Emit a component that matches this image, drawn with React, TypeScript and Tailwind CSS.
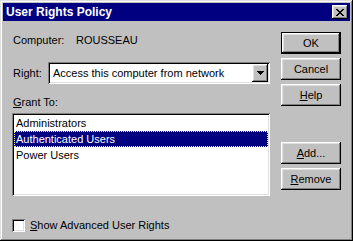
import React from "react";

const raised =
  "shadow-[inset_-1px_-1px_#000,inset_1px_1px_#fff,inset_-2px_-2px_#808080,inset_2px_2px_#dfdfdf]";
const sunken =
  "shadow-[inset_1px_1px_#808080,inset_-1px_-1px_#fff,inset_2px_2px_#000,inset_-2px_-2px_#dfdfdf]";

function Btn({ children, def }: { children: React.ReactNode; def?: boolean }) {
  if (def) {
    return (
      <div className="w-[60px] h-[22px] border border-black">
        <div className={`w-full h-full bg-[#c0c0c0] ${raised} flex items-center justify-center`}>
          {children}
        </div>
      </div>
    );
  }
  return (
    <div className={`w-[60px] h-[22px] bg-[#c0c0c0] ${raised} flex items-center justify-center`}>
      {children}
    </div>
  );
}

export default function App() {
  return (
    <div
      className="w-[353px] h-[241px] bg-[#c0c0c0] p-[3px] shadow-[inset_-1px_-1px_#000,inset_1px_1px_#dfdfdf,inset_-2px_-2px_#808080,inset_2px_2px_#fff] flex flex-col text-[11px] leading-[13px] text-black"
      style={{ fontFamily: '"Liberation Sans", Arial, sans-serif' }}
    >
      {/* Title bar */}
      <div className="h-[18px] bg-[#000080] flex items-center justify-between pl-[3px] pr-[2px]">
        <span className="text-white font-bold text-[12px] leading-[14px]">User Rights Policy</span>
        <div className={`w-[16px] h-[14px] bg-[#c0c0c0] ${raised} flex items-center justify-center`}>
          <svg width="8" height="7" viewBox="0 0 8 7" shapeRendering="crispEdges">
            <path d="M0 0h2v1H0zM6 0h2v1H6zM1 1h2v1H1zM5 1h2v1H5zM2 2h4v1H2zM3 3h2v1H3zM2 4h4v1H2zM1 5h2v1H1zM5 5h2v1H5zM0 6h2v1H0zM6 6h2v1H6z" fill="#000" />
          </svg>
        </div>
      </div>

      {/* Body */}
      <div className="flex flex-1">
        {/* Left column */}
        <div className="ml-[9px] w-[258px] flex flex-col">
          <div className="mt-[13px] h-[13px] flex items-center">
            <span className="ml-[1px] w-[63px]">Computer:</span>
            <span>ROUSSEAU</span>
          </div>
          <div className="mt-[15px] h-[22px] flex items-center">
            <span className="ml-[1px] w-[35px]">
              Ri<u>g</u>ht:
            </span>
            <div className={`w-[222px] h-[22px] bg-white ${sunken} flex items-center pl-[5px] pr-[2px]`}>
              <span className="flex-1">Access this computer from network</span>
              <div className={`w-[16px] h-[18px] bg-[#c0c0c0] ${raised} flex items-center justify-center`}>
                <svg width="7" height="4" viewBox="0 0 7 4" shapeRendering="crispEdges">
                  <path d="M0 0h7v1H0zM1 1h5v1H1zM2 2h3v1H2zM3 3h1v1H3z" fill="#000" />
                </svg>
              </div>
            </div>
          </div>
          <div className="mt-[12px] h-[13px] flex items-center">
            <span className="ml-[1px]">
              <u>G</u>rant To:
            </span>
          </div>
          <div className={`mt-[4px] h-[83px] bg-white ${sunken} p-[2px] flex flex-col`}>
            <div className="h-[16px] flex items-center pl-[2px]">Administrators</div>
            <div className="h-[16px] flex items-center pl-[1px] bg-[#000080] text-white border border-dotted border-[#ffff7f]">
              Authenticated Users
            </div>
            <div className="h-[16px] flex items-center pl-[2px]">Power Users</div>
          </div>
          <div className="mt-[23px] h-[13px] flex items-center">
            <div className={`w-[13px] h-[13px] bg-white ${sunken}`} />
            <span className="ml-[5px]">
              <u>S</u>how Advanced User Rights
            </span>
          </div>
        </div>

        {/* Right column */}
        <div className="ml-[11px] flex flex-col">
          <div className="mt-[11px] flex flex-col gap-[4px]">
            <Btn def>OK</Btn>
            <Btn>Cancel</Btn>
            <Btn>
              <span>
                <u>H</u>elp
              </span>
            </Btn>
          </div>
          <div className="mt-[36px] flex flex-col gap-[4px]">
            <Btn>
              <span>
                <u>A</u>dd...
              </span>
            </Btn>
            <Btn>
              <span>
                <u>R</u>emove
              </span>
            </Btn>
          </div>
        </div>
      </div>
    </div>
  );
}
